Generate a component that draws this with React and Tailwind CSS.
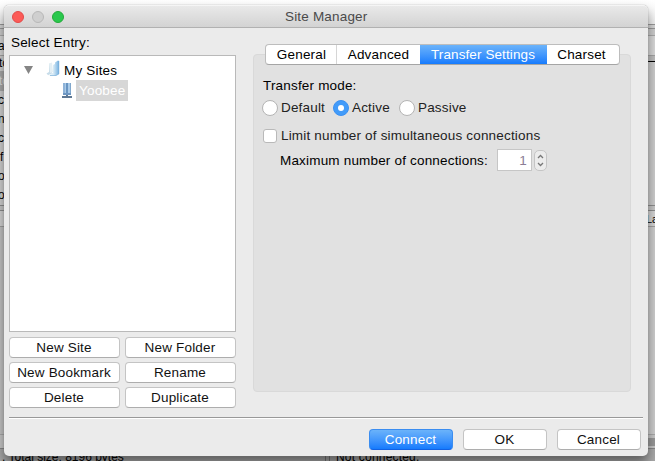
import React from "react";

function PushButton({ children, primary = false, className = "" }) {
  return (
    <button
      className={`flex h-[21px] items-center justify-center rounded-[4px] border pr-px leading-none ${
        primary
          ? "border-[#3b8df0] border-b-[#1262e4] bg-linear-to-b from-[#6bb3fa] to-[#147bfd] text-white"
          : "border-[#c4c4c4] border-b-[#adadad] bg-white text-[#111]"
      } ${className}`}
    >
      {children}
    </button>
  );
}

function Radio({ label, checked = false, className = "" }) {
  return (
    <label className={`flex items-center ${className}`}>
      <span
        className={`mr-[3px] flex size-4 items-center justify-center rounded-full border ${
          checked ? "border-[#3b91f3] bg-[#429bf9]" : "border-[#b4b4b4] bg-white"
        }`}
      >
        {checked && <span className="size-[6px] rounded-full bg-white" />}
      </span>
      {label}
    </label>
  );
}

function FolderIcon() {
  return (
    <svg width="15" height="17" viewBox="0 0 15 17">
      <defs>
        <linearGradient id="folderFront" x1="0" x2="1">
          <stop offset="0" stopColor="#f4fafc" />
          <stop offset=".5" stopColor="#d5e9f5" />
          <stop offset="1" stopColor="#74b0e0" />
        </linearGradient>
      </defs>
      <path d="M0.5 13.5 L3 12 L3 4 L5 3 L6 14 L2 15 Z" fill="#c6dce9" />
      <path d="M3 3.5 L6 2.5 L7 12 L4 13 Z" fill="#e4eff4" />
      <path d="M7 5 L9 4 L9 2.5 L12 0.5 L13 1 L13 14 L10 15.5 L2 15.5 L7 12.5 Z" fill="url(#folderFront)" />
      <path d="M12.8 1 V14 L10 15.5 H4" fill="none" stroke="#79afd9" strokeWidth=".7" />
    </svg>
  );
}

function ServerIcon() {
  return (
    <svg width="12" height="17" viewBox="0 0 12 17">
      <path d="M2 1 H10 V12 H2 Z" fill="#a9cae8" />
      <path d="M2 1 H4 V12 H2 Z" fill="#8fb3d8" />
      <path d="M5.3 1 H6.7 V12 H5.3 Z" fill="#4e7fb2" />
      <path d="M9 1 H10 V12 H9 Z" fill="#80a7cc" />
      <path d="M2 11 H10 V13 H2 Z" fill="#6d96c2" />
      <path d="M5 13 H7 V14 H11 V16 H1 V14 H5 Z" fill="#5e7894" />
    </svg>
  );
}

const clippedRows = ["c", "n", "c", "f", "o", "o"];

function BackgroundWindow() {
  return (
    <div className="flex h-full flex-col bg-[#cfcfcf] text-[12px] tracking-normal">
      <div className="h-6 bg-linear-to-b from-white to-[#f1f1f1]" />
      <div className="h-[5px] border-y border-[#999] bg-[#d8d8d8]" />
      <div className="h-[7px] border-b border-[#aaa] bg-[#cecece]" />
      <div className="flex h-[20px] items-center border-b border-[#a5a5a5] bg-[#dadada] leading-[22px]">
        <span className="-ml-[2px]">a</span>
      </div>
      <div className="flex h-[149px] justify-between">
        <div className="w-5 bg-[#d2d2d2]">
          <div className="h-[15px] leading-[15px]"><span className="-ml-px">to</span></div>
          <div className="h-5 bg-[#aaa] leading-5 text-[#ddd]"><span className="-ml-px">to</span></div>
          {clippedRows.map((text, i) => (
            <div key={i} className="h-[19px] leading-[19px]"><span className={text === "f" ? "" : "-ml-[2px]"}>{text}</span></div>
          ))}
        </div>
        <div className="flex w-5 flex-col">
          <div className="h-[6px] border-b border-black bg-[#bfbfbf]" />
          <div className="flex-1 bg-[#cecece]" />
        </div>
      </div>
      <div className="h-[6px] border-y border-[#8e8e8e] bg-[#c8c8c8]" />
      <div className="flex h-[16px] items-center justify-end border-b border-[#a0a0a0] bg-[#d5d5d5] leading-4">
        <span className="w-[9px] text-[11px]">La</span>
      </div>
      <div className="flex flex-1 justify-between">
        <div className="w-5 bg-[#c5c5c5]" />
        <div className="w-5 bg-[#cecece]" />
      </div>
      <div className="flex h-[27px] flex-col border-t border-[#aaa] bg-[#c8c8c8]">
        <div className="ml-auto mt-[3px] h-2 w-5 bg-[#999]" />
        <div className="mt-[2px] flex h-[13px] border-t border-[#888] bg-[#a9a9a9] leading-[16px]">
          <span className="w-[325px] whitespace-pre pl-[2px]">. Total size: 8196 bytes</span>
          <span className="w-[5px] border-x border-[#777]" />
          <span className="pl-[6px] tracking-[0.2px]">Not connected.</span>
        </div>
      </div>
    </div>
  );
}

function EntryPanel() {
  return (
    <section className="mt-[5px] flex w-[227px] flex-col">
      <div className="pl-[2px] leading-5">Select Entry:</div>
      <div className="mt-[2px] h-[277px] border border-[#b9b9b9] bg-white pt-[4px]">
        <div className="flex h-5 items-center pl-[14px]">
          <svg width="9" height="8" viewBox="0 0 9 8"><path d="M0 0 H9 L4.5 8 Z" fill="#858585" /></svg>
          <span className="-mt-1 ml-[13px] mr-[3px]"><FolderIcon /></span>
          <span className="pt-px">My Sites</span>
        </div>
        <div className="flex h-[21px] items-center pl-[51px]">
          <ServerIcon />
          <span className="ml-[3px] h-[21px] w-[52px] bg-[#d7d7d7] pl-[3px] leading-[22px] text-white">Yoobee</span>
        </div>
      </div>
      <div className="mt-[5px] grid grid-cols-2 gap-x-[5px] gap-y-1">
        <PushButton>New Site</PushButton>
        <PushButton>New Folder</PushButton>
        <PushButton>New Bookmark</PushButton>
        <PushButton>Rename</PushButton>
        <PushButton>Delete</PushButton>
        <PushButton>Duplicate</PushButton>
      </div>
    </section>
  );
}

function Tabs() {
  return (
    <div className="mx-auto -mt-[11px] flex h-[21px] w-[355px] overflow-hidden rounded-[4px] border border-[#bdbdbd] border-b-[#a5a5a5] bg-white text-center leading-[20px] text-black">
      <span className="w-[71px] border-r border-[#d6d6d6] pl-[2px]">General</span>
      <span className="w-[83px] pl-px">Advanced</span>
      <span className="-my-px w-[127px] border-y border-t-[#4d9ef5] border-b-[#1568e8] bg-linear-to-b from-[#6bb3fa] to-[#147bfd] tracking-[0.1px] text-white">Transfer Settings</span>
      <span className="flex-1 pr-[2px]">Charset</span>
    </div>
  );
}

function SettingsPanel() {
  return (
    <section className="mt-[26px] h-[338px] w-[378px] rounded-[4px] border border-[#d9d9d9] bg-[#e1e1e1]">
      <Tabs />
      <div className="pl-[9px] pt-[11px] text-[#222]">
        <div className="leading-5 text-black">Transfer mode:</div>
        <div className="mt-px -ml-px flex h-[21px] items-center">
          <Radio label="Default" className="w-[71px]" />
          <Radio label="Active" checked className="w-[66px]" />
          <Radio label="Passive" />
        </div>
        <label className="mt-2 flex h-5 items-center">
          <span className="mr-1 size-[14px] rounded-[3px] border border-[#b9b9b9] bg-white" />
          Limit number of simultaneous connections
        </label>
        <div className="mt-[3px] flex h-[22px] items-center pl-[17px] text-black">
          <span className="w-[217px] pt-px">Maximum number of connections:</span>
          <span className="h-[22px] w-[35px] border border-[#c6c6c6] bg-white pr-[4px] text-right leading-[22px] text-[#8b7d95]">1</span>
          <span className="ml-[2px] flex h-[21px] w-[13px] items-center justify-center rounded-[5px] border border-[#c5c5c5] bg-[#ececec]">
            <svg width="7" height="13" viewBox="0 0 7 13" fill="none" stroke="#777" strokeWidth="1.3">
              <path d="M1 4 L3.5 1.5 L6 4 M1 9 L3.5 11.5 L6 9" />
            </svg>
          </span>
        </div>
      </div>
    </section>
  );
}

export default function App() {
  return (
    <main className="relative h-[461px] w-[655px] overflow-hidden font-['Liberation_Sans',Arial,sans-serif] text-[13.5px] leading-none tracking-[0.18px] whitespace-nowrap text-black">
      <BackgroundWindow />
      <div className="absolute left-[4px] top-[5px] flex h-[451px] w-[644px] flex-col rounded-[5px] bg-[#ebebeb] shadow-[0_0_1px_#777,0_7px_12px_rgba(0,0,0,0.45)]">
        <header className="flex h-[23px] items-center rounded-t-[5px] border-b border-t border-b-[#b1b1b1] border-t-[#f5f5f5] bg-linear-to-b from-[#e9e9e9] to-[#d3d3d3] pl-2 text-[#4a4a4a]">
          <div className="flex w-[273px] gap-2">
            <span className="size-3 rounded-full border border-[#e24b4a] bg-[#fc5b57]" />
            <span className="size-3 rounded-full border border-[#b8b8b8] bg-[#cfcfcf]" />
            <span className="size-3 rounded-full border border-[#23aa39] bg-[#2ac84d]" />
          </div>
          <span className="pt-px">Site Manager</span>
        </header>
        <div className="flex h-[389px] gap-[17px] pl-[5px]">
          <EntryPanel />
          <SettingsPanel />
        </div>
        <div className="ml-[5px] h-[2px] w-[634px] border-b border-white bg-[#999]" />
        <footer className="flex justify-end gap-[10px] pr-[7px] pt-[10px]">
          <PushButton primary className="w-[84px]">Connect</PushButton>
          <PushButton className="w-[84px]">OK</PushButton>
          <PushButton className="w-[84px]">Cancel</PushButton>
        </footer>
      </div>
    </main>
  );
}
